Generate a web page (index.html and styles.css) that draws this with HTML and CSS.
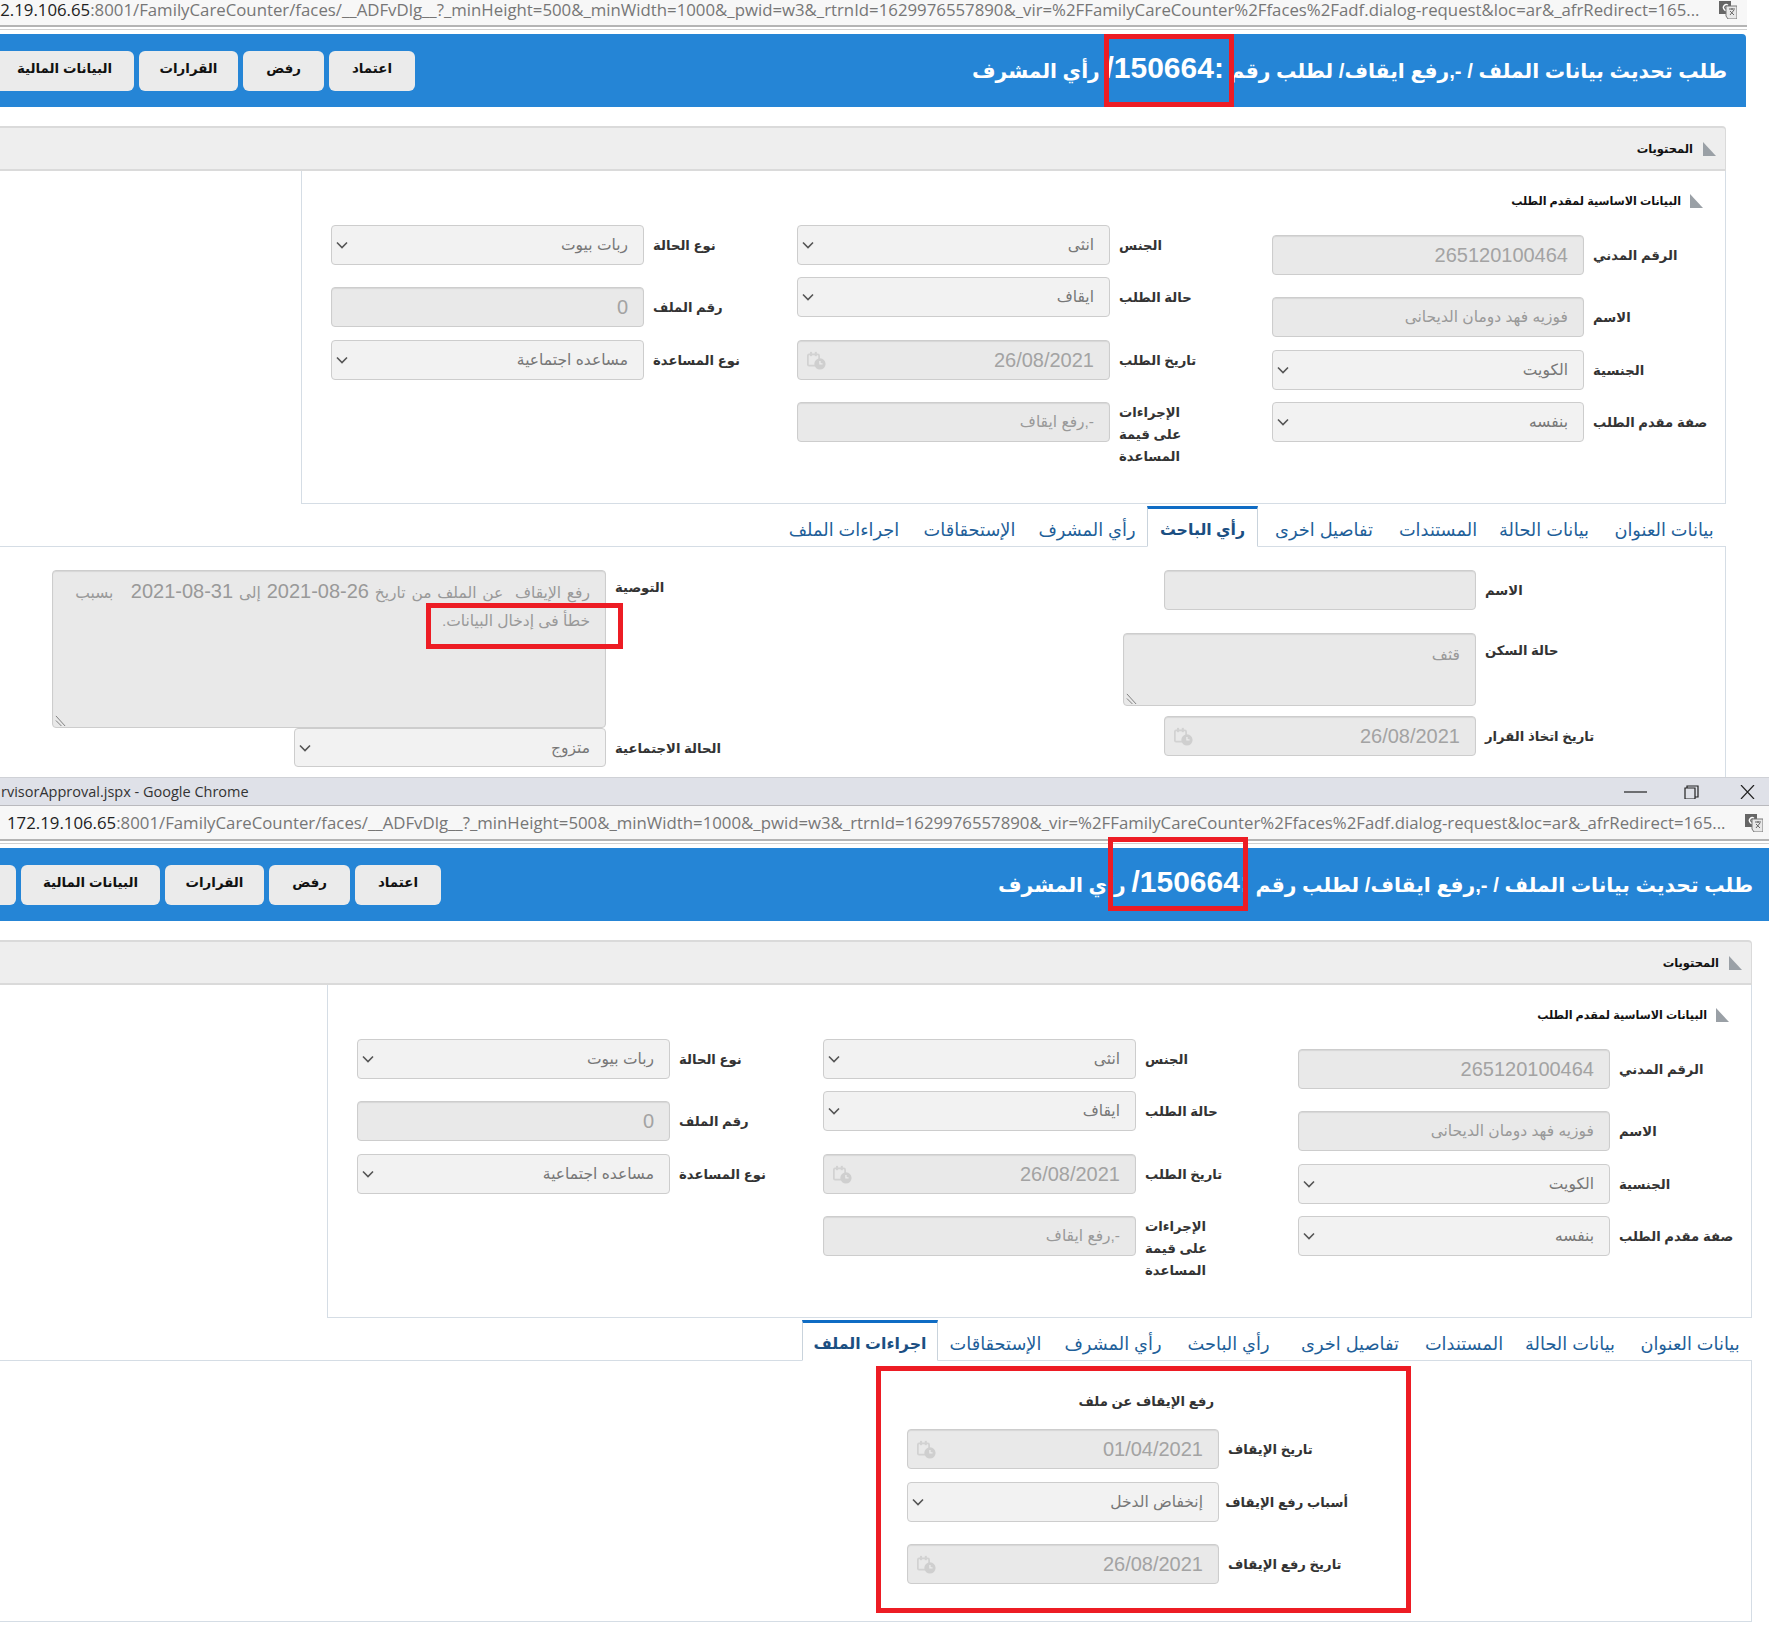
FILE: index.html
```html
<!DOCTYPE html>
<html lang="ar" dir="rtl">
<head>
<meta charset="utf-8">
<title>طلب تحديث بيانات الملف</title>
<link rel="stylesheet" href="styles.css">
</head>
<body>
<svg class="defs" aria-hidden="true">
  <symbol id="cal" viewBox="0 0 22 22"><rect x="1" y="4" width="13" height="13" rx="1.5" fill="none" stroke="#d2d2d2" stroke-width="2"/><rect x="3.5" y="1" width="2.4" height="5" fill="#d2d2d2"/><rect x="9" y="1" width="2.4" height="5" fill="#d2d2d2"/><circle cx="15" cy="15" r="6.5" fill="#cfcfcf"/><path d="M15 11.5V15h3" fill="none" stroke="#ececec" stroke-width="1.5"/></symbol>
  <symbol id="chev" viewBox="0 0 12 8"><path d="M1 1.5l5 5 5-5" fill="none" stroke="#555" stroke-width="1.6"/></symbol>
  <symbol id="tri" viewBox="0 0 14 14"><path d="M1 0L14 14H1z" fill="#9aa0a6"/></symbol>
  <symbol id="grip" viewBox="0 0 12 12"><path d="M1 1l10 11M1 6l6 6" fill="none" stroke="#777" stroke-width="1"/></symbol>
  <symbol id="tr" viewBox="0 0 18 18"><rect x="0" y="0" width="12" height="13" fill="#666"/><path d="M9 4.3A2.8 2.8 0 1 0 9 8.7V6.5H6.5" fill="none" stroke="#fff" stroke-width="1.4"/><path d="M7 5h11v13H9l-2-3z" fill="#e8e8e8" stroke="#777"/><path d="M10 8h6M13 7v2M11 14l4-5M11 10l4 4" fill="none" stroke="#666"/></symbol>
</svg>

<main class="page">
  <section class="screen screen-a">
    <div class="urlbar"><p class="url"><b>172.19.106.65</b>:8001/FamilyCareCounter/faces/__ADFvDlg__?_minHeight=500&amp;_minWidth=1000&amp;_pwid=w3&amp;_rtrnId=1629976557890&amp;_vir=%2FFamilyCareCounter%2Ffaces%2Fadf.dialog-request&amp;loc=ar&amp;_afrRedirect=165...</p><svg class="translate"><use href="#tr"/></svg></div>
    <div class="doc">
      <header class="head">
        <h1 class="head-title">طلب تحديث بيانات الملف / -,رفع ايقاف/ لطلب رقم <span class="num">:150664/</span> رأي المشرف</h1>
        <div class="head-btns"><button class="btn b1">اعتماد</button><button class="btn b2">رفض</button><button class="btn b3">القرارات</button><button class="btn b4">البيانات المالية</button><button class="btn b5"></button></div>
      </header>
      <div class="section-bar"><svg class="tri"><use href="#tri"/></svg><span>المحتويات</span></div>
      <div class="form-panel">
        <div class="sub-title"><svg class="tri"><use href="#tri"/></svg><span>البيانات الاساسية لمقدم الطلب</span></div>
        <div class="cols">
          <div class="col col1">
            <div class="row"><label class="lab">الرقم المدني</label><div class="inp num-val">265120100464</div></div>
            <div class="row mt22"><label class="lab">الاسم</label><div class="inp">فوزيه فهد دومان الديحانى</div></div>
            <div class="row mt13"><label class="lab">الجنسية</label><div class="inp sel">الكويت<svg class="chev"><use href="#chev"/></svg></div></div>
            <div class="row mt12"><label class="lab">صفة مقدم الطلب</label><div class="inp sel">بنفسه<svg class="chev"><use href="#chev"/></svg></div></div>
          </div>
          <div class="col col2">
            <div class="row"><label class="lab">الجنس</label><div class="inp sel">انثى<svg class="chev"><use href="#chev"/></svg></div></div>
            <div class="row mt12"><label class="lab">حالة الطلب</label><div class="inp sel">ايقاف<svg class="chev"><use href="#chev"/></svg></div></div>
            <div class="row mt23"><label class="lab">تاريخ الطلب</label><div class="inp num-val">26/08/2021<svg class="cal"><use href="#cal"/></svg></div></div>
            <div class="row row-top mt22"><label class="lab lab-wrap">الإجراءات على قيمة المساعدة</label><div class="inp">-,رفع ايقاف</div></div>
          </div>
          <div class="col col3">
            <div class="row"><label class="lab">نوع الحالة</label><div class="inp sel">ربات بيوت<svg class="chev"><use href="#chev"/></svg></div></div>
            <div class="row mt22"><label class="lab">رقم الملف</label><div class="inp num-val">0</div></div>
            <div class="row mt13"><label class="lab">نوع المساعدة</label><div class="inp sel">مساعده اجتماعية<svg class="chev"><use href="#chev"/></svg></div></div>
          </div>
        </div>
      </div>
      <nav class="tabs"><a class="tab">بيانات العنوان</a><a class="tab">بيانات الحالة</a><a class="tab">المستندات</a><a class="tab">تفاصيل اخرى</a><a class="tab on">رأي الباحث</a><a class="tab">رأي المشرف</a><a class="tab">الإستحقاقات</a><a class="tab">اجراءات الملف</a></nav>
      <div class="tab-panel tp-a">
        <div class="tp-right">
          <div class="row"><label class="lab lab-130">الاسم</label><div class="inp"></div></div>
          <div class="row row-top mt23"><label class="lab lab-130 lab-pad">حالة السكن</label><div class="inp area area-s">قثف<svg class="grip"><use href="#grip"/></svg></div></div>
          <div class="row mt10"><label class="lab lab-130">تاريخ اتخاذ القرار</label><div class="inp num-val">26/08/2021<svg class="cal"><use href="#cal"/></svg></div></div>
        </div>
        <div class="tp-left">
          <div class="row row-top"><label class="lab lab-110 lab-pad">التوصية</label><div class="inp area area-l"><span class="line-one">رفع الإيقاف&nbsp; عن الملف من تاريخ <span class="digits">2021-08-26</span> إلى <span class="digits">2021-08-31</span>&nbsp;&nbsp; بسبب</span><br>خطأ فى إدخال البيانات.<svg class="grip"><use href="#grip"/></svg></div></div>
          <div class="row"><label class="lab lab-110">الحالة الاجتماعية</label><div class="inp sel">متزوج<svg class="chev"><use href="#chev"/></svg></div></div>
        </div>
      </div>
    </div>
    <i class="mark mark-a1"></i><i class="mark mark-a2"></i>
  </section>

  <section class="screen screen-b">
    <div class="titlebar"><span class="win-title">rvisorApproval.jspx - Google Chrome</span><div class="win-btns"><svg class="win-ic" viewBox="0 0 23 14"><path d="M0 7h23" stroke="#222" stroke-width="1.2"/></svg><svg class="win-ic" viewBox="0 0 23 14"><path d="M7 3V1h11v11h-3M5 3h10v11H5z" fill="none" stroke="#222" stroke-width="1.2"/></svg><svg class="win-ic" viewBox="0 0 23 14"><path d="M5 0l13 14M18 0L5 14" stroke="#222" stroke-width="1.2"/></svg></div></div>
    <div class="urlbar"><p class="url"><b>172.19.106.65</b>:8001/FamilyCareCounter/faces/__ADFvDlg__?_minHeight=500&amp;_minWidth=1000&amp;_pwid=w3&amp;_rtrnId=1629976557890&amp;_vir=%2FFamilyCareCounter%2Ffaces%2Fadf.dialog-request&amp;loc=ar&amp;_afrRedirect=165...</p><svg class="translate"><use href="#tr"/></svg></div>
    <div class="doc">
      <header class="head">
        <h1 class="head-title">طلب تحديث بيانات الملف / -,رفع ايقاف/ لطلب رقم <span class="num">:150664/</span> رأي المشرف</h1>
        <div class="head-btns"><button class="btn b1">اعتماد</button><button class="btn b2">رفض</button><button class="btn b3">القرارات</button><button class="btn b4">البيانات المالية</button><button class="btn b5"></button></div>
      </header>
      <div class="section-bar"><svg class="tri"><use href="#tri"/></svg><span>المحتويات</span></div>
      <div class="form-panel">
        <div class="sub-title"><svg class="tri"><use href="#tri"/></svg><span>البيانات الاساسية لمقدم الطلب</span></div>
        <div class="cols">
          <div class="col col1">
            <div class="row"><label class="lab">الرقم المدني</label><div class="inp num-val">265120100464</div></div>
            <div class="row mt22"><label class="lab">الاسم</label><div class="inp">فوزيه فهد دومان الديحانى</div></div>
            <div class="row mt13"><label class="lab">الجنسية</label><div class="inp sel">الكويت<svg class="chev"><use href="#chev"/></svg></div></div>
            <div class="row mt12"><label class="lab">صفة مقدم الطلب</label><div class="inp sel">بنفسه<svg class="chev"><use href="#chev"/></svg></div></div>
          </div>
          <div class="col col2">
            <div class="row"><label class="lab">الجنس</label><div class="inp sel">انثى<svg class="chev"><use href="#chev"/></svg></div></div>
            <div class="row mt12"><label class="lab">حالة الطلب</label><div class="inp sel">ايقاف<svg class="chev"><use href="#chev"/></svg></div></div>
            <div class="row mt23"><label class="lab">تاريخ الطلب</label><div class="inp num-val">26/08/2021<svg class="cal"><use href="#cal"/></svg></div></div>
            <div class="row row-top mt22"><label class="lab lab-wrap">الإجراءات على قيمة المساعدة</label><div class="inp">-,رفع ايقاف</div></div>
          </div>
          <div class="col col3">
            <div class="row"><label class="lab">نوع الحالة</label><div class="inp sel">ربات بيوت<svg class="chev"><use href="#chev"/></svg></div></div>
            <div class="row mt22"><label class="lab">رقم الملف</label><div class="inp num-val">0</div></div>
            <div class="row mt13"><label class="lab">نوع المساعدة</label><div class="inp sel">مساعده اجتماعية<svg class="chev"><use href="#chev"/></svg></div></div>
          </div>
        </div>
      </div>
      <nav class="tabs"><a class="tab">بيانات العنوان</a><a class="tab">بيانات الحالة</a><a class="tab">المستندات</a><a class="tab">تفاصيل اخرى</a><a class="tab">رأي الباحث</a><a class="tab">رأي المشرف</a><a class="tab">الإستحقاقات</a><a class="tab on">اجراءات الملف</a></nav>
      <div class="tab-panel tp-b">
        <h2 class="stop-title">رفع الإيقاف عن ملف</h2>
        <div class="row"><label class="lab lab-120">تاريخ الإيقاف</label><div class="inp num-val">01/04/2021<svg class="cal"><use href="#cal"/></svg></div></div>
        <div class="row mt13"><label class="lab lab-120">أسباب رفع الإيقاف</label><div class="inp sel">إنخفاض الدخل<svg class="chev"><use href="#chev"/></svg></div></div>
        <div class="row mt22"><label class="lab lab-120">تاريخ رفع الإيقاف</label><div class="inp num-val">26/08/2021<svg class="cal"><use href="#cal"/></svg></div></div>
      </div>
    </div>
    <i class="mark mark-a3"></i><i class="mark mark-b2"></i>
  </section>
</main>
</body>
</html>
```
FILE: styles.css
```css
* { box-sizing: border-box; }
html, body { margin: 0; padding: 0; background: #fff; }
body { font-family: "Liberation Sans", "DejaVu Sans", sans-serif; direction: rtl; overflow: hidden; width: 1769px; height: 1629px; }
.defs { position: absolute; width: 0; height: 0; }
.page { width: 1769px; overflow: hidden; }
.screen { position: relative; overflow: hidden; width: 1769px; }
.screen-a { height: 777px; }
.screen-b { height: 852px; }

/* browser chrome */
.titlebar { direction: ltr; height: 29px; background: #dfe1e8; border-top: 1px solid #cfd1d6; border-bottom: 1px solid #b9b9bd; display: flex; align-items: center; justify-content: space-between; padding-left: 1px; }
.win-title { font: 14.5px "Open Sans", sans-serif; color: #333; white-space: nowrap; }
.win-btns { display: flex; gap: 33px; margin-right: 10px; }
.win-ic { width: 23px; height: 14px; display: block; }
.urlbar { direction: ltr; width: 1773px; height: 35px; margin-right: -4px; background: #f7f7f7; border-bottom: 2px solid #b4b4b4; display: flex; align-items: center; padding: 0 10px 0 7px; box-shadow: 0 2px 0 #fff, 0 3px 0 #d0d0d0; }
.screen-a .urlbar { margin-right: 22px; height: 27px; padding-bottom: 6px; }
.url { flex: 1; margin: 0; font: 16.8px "Open Sans", sans-serif; color: #767676; white-space: nowrap; overflow: hidden; }
.url b { font-weight: 400; color: #222; }
.translate { width: 18px; height: 18px; flex: none; }

/* document */
.doc { width: 1786px; }
.screen-a .doc { margin-right: 23px; margin-top: 7px; }
.screen-b .doc { margin-right: -3px; margin-top: 7px; }
.head { height: 73px; background: #2585d6; display: flex; align-items: center; justify-content: space-between; padding-right: 19px; border-top-right-radius: 4px; }
.head-title { margin: 0; padding-bottom: 5px; color: #fff; font-size: 20.3px; font-weight: 700; white-space: nowrap; }
.num { font-size: 30px; }
.head-btns { display: flex; gap: 5px; margin-left: -30px; direction: ltr; flex-direction: row-reverse; }
.btn { height: 40px; border: 0; border-radius: 6px; background: #ebebeb; font: 700 13.4px "Liberation Sans", "DejaVu Sans", sans-serif; color: #111; padding: 0 0 4px; }
.b1 { width: 86px; } .b2 { width: 81px; } .b3 { width: 99px; } .b4 { width: 139px; } .b5 { width: 60px; }

.section-bar { margin: 19px 20px 0 0; height: 45px; background: #eee; border: 1px solid #dadada; border-top-width: 2px; border-bottom-width: 2px; border-radius: 0 4px 0 0; display: flex; align-items: center; padding-right: 9px; font-size: 11.5px; font-weight: 700; color: #111; gap: 9px; }
.tri { width: 14px; height: 14px; flex: none; }
.form-panel { margin-right: 20px; width: 1425px; height: 333px; border: 1px solid #d5dde5; border-top: 0; position: relative; padding-top: 20px; }
.sub-title { height: 20px; display: flex; align-items: center; gap: 8px; padding-right: 22px; font-size: 11.2px; font-weight: 700; color: #111; }
.cols { display: flex; margin: 14px 15px 0 0; }
.col1 { width: 438px; margin-top: 10px; margin-left: 64px; }
.col2 { width: 411px; margin-left: 43px; }
.col3 { width: 423px; }
.col1 .lab { width: 117px; }
.col2 .lab { width: 89px; }
.col3 .lab { width: 101px; }
.col2 .inp, .col3 .inp { width: 313px; }

.row { display: flex; align-items: center; gap: 9px; }
.row-top { align-items: flex-start; }
.mt10 { margin-top: 10px; } .mt12 { margin-top: 12px; } .mt13 { margin-top: 13px; } .mt21 { margin-top: 21px; } .mt22 { margin-top: 22px; } .mt23 { margin-top: 23px; }
.lab { font-size: 13.2px; font-weight: 700; color: #333; text-align: left; white-space: nowrap; flex: none; padding-top: 1px; }
.lab-wrap { white-space: normal; line-height: 22px; padding-right: 17px; padding-top: 0; }
.lab-pad { padding-top: 10px; }
.lab-130 { width: 130px; } .lab-110 { width: 110px; } .lab-120 { width: 120px; }
.inp { position: relative; width: 312px; height: 40px; flex: none; background: #e9e9e9; border: 1px solid #cdcdcd; border-radius: 4px; box-shadow: inset 0 1px 1px rgba(0,0,0,.08); padding: 0 15px; display: flex; align-items: center; font-size: 15.5px; color: #999; white-space: nowrap; }
.sel { background: #f2f2f2; color: #777; box-shadow: none; }
.num-val { font-size: 20px; color: #a3a3a3; }
.chev { position: absolute; left: 4px; top: 15px; width: 12px; height: 8px; }
.cal { position: absolute; left: 9px; top: 10px; width: 19px; height: 19px; }
.area { display: block; padding: 7px 15px; line-height: 27.5px; }
.area-s { width: 353px; height: 73px; }
.area-l { width: 554px; height: 158px; }
.line-one { word-spacing: 1.5px; }
.digits { font-size: 20px; direction: ltr; unicode-bidi: isolate; }
.grip { position: absolute; left: 2px; bottom: 1px; width: 11px; height: 11px; }

/* tabs */
.tabs { display: flex; height: 41px; margin-top: 2px; margin-right: 20px; }
.tab { display: flex; align-items: center; justify-content: center; flex: none; padding-top: 4px; font-size: 17.8px; color: #1f5f99; border-top: 3px solid transparent; border-bottom: 1px solid #d5dde5; white-space: nowrap; }
.tab.on { font-size: 15.8px; font-weight: 700; color: #1b4f82; border-top-color: #0f6cc4; border-left: 1px solid #c9d3dc; border-right: 1px solid #c9d3dc; border-bottom-color: #fff; }
.tab:nth-child(1) { width: 124px; } .tab:nth-child(2) { width: 116px; } .tab:nth-child(3) { width: 96px; } .tab:nth-child(4) { width: 132px; } .tab:nth-child(5) { width: 111px; } .tab:nth-child(6) { width: 120px; } .tab:nth-child(7) { width: 115px; } .tab:nth-child(8) { width: 136px; }
.tabs::after { content: ""; flex: 1; border-bottom: 1px solid #d5dde5; }
.tab-panel { margin-right: 20px; border-right: 1px solid #d5dde5; }
.tp-a { display: flex; padding: 23px 110px 0 0; gap: 398px; height: 231px; }
.tp-a .inp.sel { height: 39px; }
.tp-b { height: 261px; padding: 31px 403px 0 0; border-bottom: 1px solid #d5dde5; }
.stop-title { margin: 0 0 17px; height: 20px; line-height: 20px; padding-right: 134px; font-size: 13.2px; font-weight: 700; color: #333; }

/* red annotation frames drawn over the screenshots */
.mark { position: absolute; border: 5px solid #ed1c24; pointer-events: none; }
.mark-a1 { left: 1104px; top: 34px; width: 130px; height: 73px; }
.mark-a2 { left: 426px; top: 603px; width: 197px; height: 46px; }
.mark-a3 { left: 1108px; top: 60px; width: 140px; height: 74px; }
.mark-b2 { left: 876px; top: 589px; width: 535px; height: 247px; }
```
